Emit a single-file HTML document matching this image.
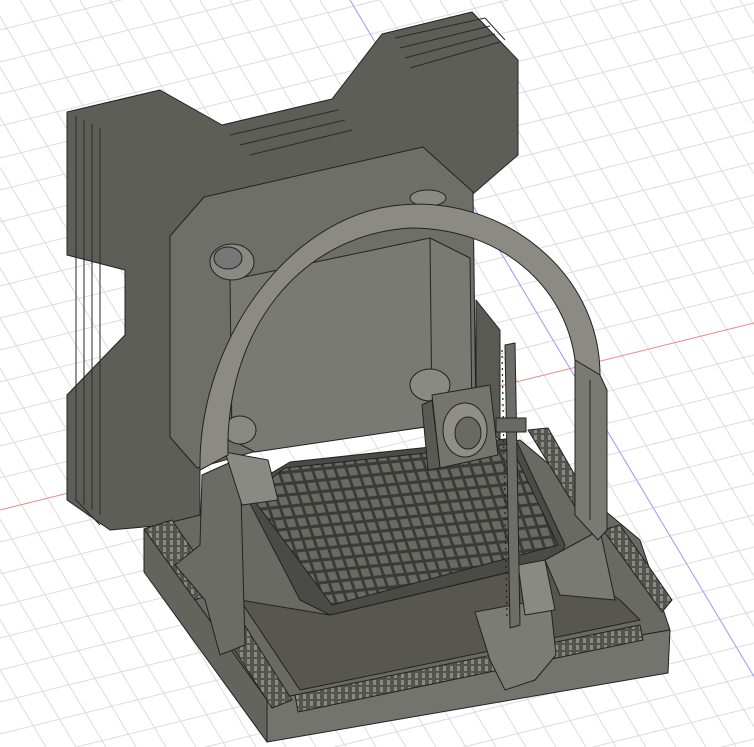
<!DOCTYPE html>
<html><head><meta charset="utf-8"><style>
html,body{margin:0;padding:0;background:#fff;width:754px;height:747px;overflow:hidden}
svg{display:block}
</style></head><body>
<svg width="754" height="747" viewBox="0 0 754 747" xmlns="http://www.w3.org/2000/svg">
<defs>
<pattern id="bed" width="11" height="11" patternUnits="userSpaceOnUse" patternTransform="matrix(1,-0.1,0.35,1,0,0)">
<rect width="11" height="11" fill="#3a3a37"/><rect x="1.5" y="1.5" width="8" height="8" fill="#6a6a64"/>
</pattern>
<pattern id="teeth" width="7" height="7" patternUnits="userSpaceOnUse">
<rect width="7" height="7" fill="#55554f"/><rect x="2" y="1" width="3" height="5" fill="#8a8a84"/>
</pattern>
<clipPath id="c"><rect width="754" height="747"/></clipPath>
</defs>
<g clip-path="url(#c)">
<rect width="754" height="747" fill="#fff"/>
<g stroke="#dcdcdc" stroke-width="1">
<line x1="0" y1="30" x2="754" y2="-157"/><line x1="0" y1="62" x2="754" y2="-125"/><line x1="0" y1="94" x2="754" y2="-93"/><line x1="0" y1="126" x2="754" y2="-61"/><line x1="0" y1="158" x2="754" y2="-29"/><line x1="0" y1="190" x2="754" y2="3"/><line x1="0" y1="222" x2="754" y2="35"/><line x1="0" y1="254" x2="754" y2="67"/><line x1="0" y1="286" x2="754" y2="99"/><line x1="0" y1="318" x2="754" y2="131"/><line x1="0" y1="350" x2="754" y2="163"/><line x1="0" y1="382" x2="754" y2="195"/><line x1="0" y1="414" x2="754" y2="227"/><line x1="0" y1="446" x2="754" y2="259"/><line x1="0" y1="478" x2="754" y2="291"/><line x1="0" y1="542" x2="754" y2="355"/><line x1="0" y1="574" x2="754" y2="387"/><line x1="0" y1="606" x2="754" y2="419"/><line x1="0" y1="638" x2="754" y2="451"/><line x1="0" y1="670" x2="754" y2="483"/><line x1="0" y1="702" x2="754" y2="515"/><line x1="0" y1="734" x2="754" y2="547"/><line x1="0" y1="766" x2="754" y2="579"/><line x1="0" y1="798" x2="754" y2="611"/><line x1="0" y1="830" x2="754" y2="643"/><line x1="0" y1="862" x2="754" y2="675"/><line x1="0" y1="894" x2="754" y2="707"/><line x1="0" y1="926" x2="754" y2="739"/>
<line x1="-100" y1="0" x2="346" y2="747"/><line x1="-70" y1="0" x2="376" y2="747"/><line x1="-40" y1="0" x2="406" y2="747"/><line x1="-10" y1="0" x2="436" y2="747"/><line x1="20" y1="0" x2="466" y2="747"/><line x1="50" y1="0" x2="496" y2="747"/><line x1="80" y1="0" x2="526" y2="747"/><line x1="110" y1="0" x2="556" y2="747"/><line x1="140" y1="0" x2="586" y2="747"/><line x1="170" y1="0" x2="616" y2="747"/><line x1="200" y1="0" x2="646" y2="747"/><line x1="230" y1="0" x2="676" y2="747"/><line x1="260" y1="0" x2="706" y2="747"/><line x1="290" y1="0" x2="736" y2="747"/><line x1="320" y1="0" x2="766" y2="747"/><line x1="380" y1="0" x2="826" y2="747"/><line x1="410" y1="0" x2="856" y2="747"/><line x1="440" y1="0" x2="886" y2="747"/><line x1="470" y1="0" x2="916" y2="747"/><line x1="500" y1="0" x2="946" y2="747"/><line x1="530" y1="0" x2="976" y2="747"/><line x1="560" y1="0" x2="1006" y2="747"/><line x1="590" y1="0" x2="1036" y2="747"/><line x1="620" y1="0" x2="1066" y2="747"/><line x1="650" y1="0" x2="1096" y2="747"/><line x1="680" y1="0" x2="1126" y2="747"/><line x1="710" y1="0" x2="1156" y2="747"/><line x1="740" y1="0" x2="1186" y2="747"/><line x1="-130" y1="0" x2="316" y2="747"/><line x1="-160" y1="0" x2="286" y2="747"/><line x1="-190" y1="0" x2="256" y2="747"/><line x1="-220" y1="0" x2="226" y2="747"/><line x1="-250" y1="0" x2="196" y2="747"/><line x1="-280" y1="0" x2="166" y2="747"/><line x1="-310" y1="0" x2="136" y2="747"/><line x1="-340" y1="0" x2="106" y2="747"/><line x1="-370" y1="0" x2="76" y2="747"/><line x1="-400" y1="0" x2="46" y2="747"/>
</g>
<line x1="0" y1="510" x2="754" y2="323" stroke="#e88" stroke-width="1"/>
<line x1="350" y1="0" x2="796" y2="747" stroke="#99f" stroke-width="1"/>

<g stroke="#222" stroke-width="1" stroke-linejoin="round">
<!-- back heatsink fins -->
<polygon fill="#5e5e59" points="67,112 160,90 222,125 332,99 382,34 472,12 518,60 518,155 474,193 200,470 200,522 110,530 67,500 67,395 125,335 125,270 67,255"/>
<g fill="none" stroke="#2a2a28">
<polyline points="76,116 76,500 100,525"/><polyline points="84,120 84,505"/><polyline points="92,124 92,510"/><polyline points="100,128 100,515"/>
<polyline points="395,38 485,18 505,40"/><polyline points="400,48 490,26"/><polyline points="405,58 495,34"/><polyline points="410,68 500,42"/>
<polyline points="230,135 338,110"/><polyline points="240,145 345,120"/><polyline points="250,155 352,130"/>
</g>
<polygon fill="#5a5a55" points="476,300 500,330 500,440 476,420"/>
<!-- central plate -->
<polygon fill="#6f6f69" points="170,236 204,197 423,147 473,192 476,420 260,450 197,468 170,437"/>
<polygon fill="#7a7a74" points="230,280 430,238 470,258 472,420 255,452 232,440"/>
<line x1="430" y1="238" x2="432" y2="420"/>
<ellipse cx="232" cy="262" rx="22" ry="18" fill="#8a8a84"/><ellipse cx="228" cy="258" rx="14" ry="11" fill="#777"/>
<ellipse cx="428" cy="198" rx="18" ry="8" fill="#8a8a84"/>
<ellipse cx="430" cy="385" rx="20" ry="16" fill="#8a8a84"/>
<ellipse cx="240" cy="430" rx="16" ry="14" fill="#8a8a84"/>
<!-- base: top face + side faces -->
<polygon fill="#6a6a64" points="144,529 200,515 520,440 640,540 670,630 267,700"/>
<polygon fill="#64645e" points="144,529 267,700 267,742 144,572"/>
<polygon fill="#74746e" points="267,700 670,630 668,673 267,742"/>
<!-- floor shadow inside base -->
<polygon fill="#57574f" points="240,600 330,615 560,560 620,600 640,620 300,690"/>
<!-- teeth rails -->
<polygon fill="url(#teeth)" points="144,529 172,520 220,590 195,600"/>
<polygon fill="url(#teeth)" points="218,625 240,618 292,700 272,708"/>
<polygon fill="url(#teeth)" points="295,695 640,625 643,640 298,712"/>
<polygon fill="url(#teeth)" points="528,430 548,428 592,505 580,515"/>
<polygon fill="url(#teeth)" points="603,530 620,525 672,600 662,612"/>
<!-- bed -->
<polygon fill="#4a4a46" points="243,490 290,462 515,438 565,545 560,560 330,615 300,600"/>
<polygon fill="url(#bed)" points="250,495 285,468 510,444 558,545 332,605"/>
<!-- right ramp -->
<polygon fill="#7a7a74" points="545,560 600,530 615,600 560,595"/>
<!-- left leg -->
<polygon fill="#6c6c66" points="202,475 240,458 245,645 220,655 205,600 175,565 200,545"/>
<polygon fill="#8a8a84" points="225,452 268,460 278,500 242,505"/>
<!-- arch -->
<path fill="#8b8b84" d="M200,470 C198,340 290,215 400,205 C500,195 600,270 600,375 L575,360 C565,285 500,228 410,228 C300,235 225,330 228,455 Z"/>
<path fill="#7a7a74" d="M600,375 L607,390 607,530 598,540 575,515 575,360 Z"/>
<line x1="590" y1="380" x2="590" y2="520"/>
<!-- carriage block -->
<polygon fill="#7c7c76" points="475,612 550,598 556,655 535,680 505,690 490,660"/>
<polygon fill="#8a8a84" points="518,565 545,560 555,610 525,615"/>
<!-- vertical rail -->
<polygon fill="#6e6e68" points="505,345 515,343 520,625 510,628"/>
<g stroke="#222" stroke-width="1.2" stroke-dasharray="2 4"><line x1="502" y1="350" x2="507" y2="620"/></g>
<!-- fan -->
<polygon fill="#75756f" points="432,395 490,385 498,455 440,468"/>
<ellipse cx="465" cy="430" rx="22" ry="27" fill="#8f8f88"/>
<ellipse cx="468" cy="433" rx="13" ry="16" fill="#6a6a64"/>
<polygon fill="#5a5a55" points="422,405 432,400 440,468 428,470"/>
<rect x="496" y="418" width="30" height="14" fill="#6a6a64"/>
</g>
</g>
</svg>
</body></html>
